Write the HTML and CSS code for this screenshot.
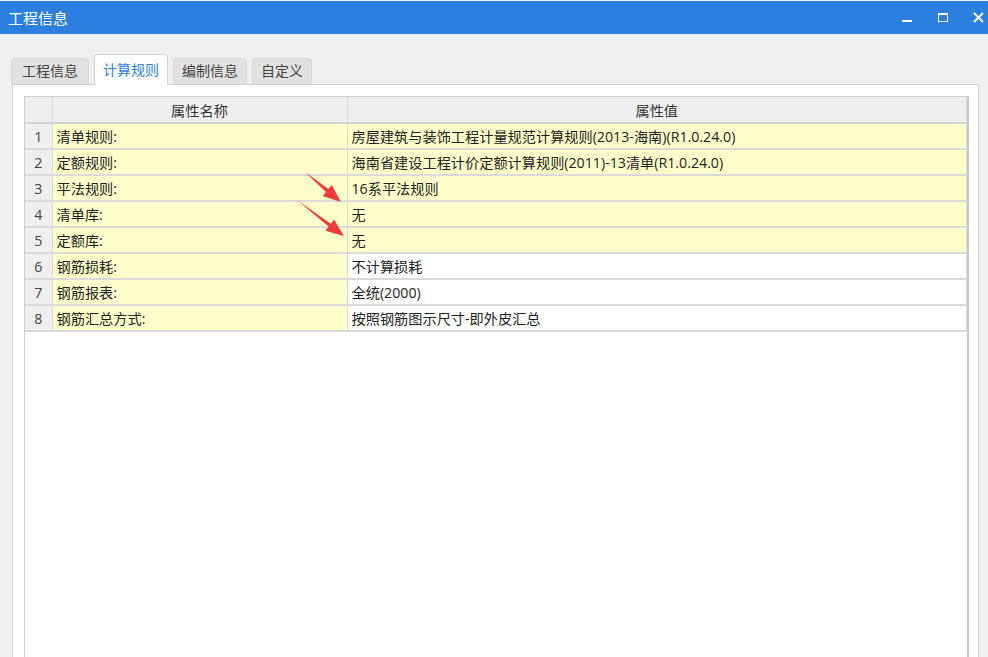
FILE: index.html
```html
<!DOCTYPE html>
<html lang="zh-CN">
<head>
    <meta charset="UTF-8">
    <title>工程信息</title>
    <link rel="stylesheet" href="styles.css">
</head>
<body>
    <div class="titlebar">
        <span class="title">工程信息</span>
        <div class="win-btns">
            <span class="btn-min"></span>
            <span class="btn-max"></span>
            <svg class="btn-close" width="11" height="11" viewBox="0 0 11 11">
                <path d="M1 1 L10 10 M10 1 L1 10" stroke="#fff" stroke-width="1.8"/>
            </svg>
        </div>
    </div>

    <div class="content">
        <div class="tabs">
            <div class="tab first">工程信息</div>
            <div class="tab active">计算规则</div>
            <div class="tab">编制信息</div>
            <div class="tab">自定义</div>
        </div>
        <div class="panel">
            <div class="grid">
                <table>
                    <thead>
                        <tr>
                            <th class="num"></th>
                            <th class="name">属性名称</th>
                            <th>属性值</th>
                        </tr>
                    </thead>
                    <tbody>
                        <tr class="hl">
                            <td class="num">1</td>
                            <td class="name">清单规则:</td>
                            <td>房屋建筑与装饰工程计量规范计算规则(2013-海南)(R1.0.24.0)</td>
                        </tr>
                        <tr class="hl">
                            <td class="num">2</td>
                            <td class="name">定额规则:</td>
                            <td>海南省建设工程计价定额计算规则(2011)-13清单(R1.0.24.0)</td>
                        </tr>
                        <tr class="hl">
                            <td class="num">3</td>
                            <td class="name">平法规则:</td>
                            <td>16系平法规则</td>
                        </tr>
                        <tr class="hl">
                            <td class="num">4</td>
                            <td class="name">清单库:</td>
                            <td>无</td>
                        </tr>
                        <tr class="hl">
                            <td class="num">5</td>
                            <td class="name">定额库:</td>
                            <td>无</td>
                        </tr>
                        <tr>
                            <td class="num">6</td>
                            <td class="name">钢筋损耗:</td>
                            <td>不计算损耗</td>
                        </tr>
                        <tr>
                            <td class="num">7</td>
                            <td class="name">钢筋报表:</td>
                            <td>全统(2000)</td>
                        </tr>
                        <tr>
                            <td class="num">8</td>
                            <td class="name">钢筋汇总方式:</td>
                            <td>按照钢筋图示尺寸-即外皮汇总</td>
                        </tr>
                    </tbody>
                </table>
            </div>
        </div>
    </div>

    <!-- annotation arrows drawn over the grid -->
    <svg class="arrows" width="988" height="657" viewBox="0 0 988 657">
        <path d="M305 172 L328.4 189.1 L331.7 185.1 L341 202 L322.7 195.9 L326 191.9 Z" fill="#f23a3a"/>
        <path d="M297 200 L330.8 223.7 L334 219.5 L344 236 L325.4 230.7 L328.6 226.5 Z" fill="#f23a3a"/>
    </svg>
</body>
</html>
```

FILE: styles.css
```css
* {
    margin: 0;
    padding: 0;
    box-sizing: border-box;
}

html, body {
    height: 100%;
}

body {
    background: #f0f0f0;
    font-family: "Open Sans", "Noto Sans CJK SC", sans-serif;
    font-size: 14px;
    color: #222;
    display: flex;
    flex-direction: column;
    overflow: hidden;
}

.titlebar {
    height: 34px;
    background: #2b7fdf;
    border-top: 1px solid #e8eef7;
    color: white;
    display: flex;
    align-items: center;
    justify-content: space-between;
    padding: 0 0 0 8px;
}

.title {
    font-size: 15px;
}

.win-btns {
    display: flex;
    align-items: center;
}

.btn-min {
    width: 10px;
    height: 2px;
    background: white;
    margin: 7px 26px 0 0;
}

.btn-max {
    width: 10px;
    height: 9px;
    border: 1px solid white;
    border-top-width: 2px;
    margin-right: 25px;
}

.btn-close {
    margin-right: 4px;
}

.content {
    flex: 1;
    display: flex;
    flex-direction: column;
    padding: 20px 9px 0 11px;
}

.tabs {
    display: flex;
    align-items: flex-end;
    gap: 5px;
    height: 30px;
    position: relative;
    z-index: 1;
}

.tab {
    height: 26px;
    padding: 0 8px;
    background: #e1e1e1;
    border: 1px solid #d9d9d9;
    border-bottom: none;
    border-radius: 4px 4px 0 0;
    color: #444;
    line-height: 24px;
}

.tab.first {
    padding: 0 10px;
}

.tab.active {
    height: 31px;
    background: white;
    color: #2b7fdf;
    line-height: 29px;
    border-color: #d4d4d4;
    margin-bottom: -1px;
}

.panel {
    flex: 1;
    background: white;
    border: 1px solid #d0d0d0;
    border-bottom: none;
    margin-left: 1px;
    padding: 11px 9px 0 11px;
    display: flex;
}

.grid {
    flex: 1;
    border: 1px solid #cfcfcf;
    border-right: 2px solid #c8c8c8;
    border-bottom: none;
}

table {
    width: 100%;
    border-collapse: collapse;
    table-layout: fixed;
    font-size: 14.2px;
}

th, td {
    height: 26px;
    border: 1px solid #dadada;
    border-width: 0 1px 2px 0;
    padding: 0 4px;
    text-align: left;
    white-space: nowrap;
    overflow: hidden;
}

th {
    background: #efefef;
    font-weight: normal;
    text-align: center;
    color: #333;
    border-bottom-color: #d4d4d4;
}

th.num, td.num {
    width: 27px;
    background: #efefef;
    text-align: center;
    color: #444;
    padding: 0;
}

th.name, td.name {
    width: 295px;
}

td.name {
    background: #ffffcc;
}

tr.hl td {
    background: #ffffcc;
}

tr.hl td.num {
    background: #efefef;
}

.arrows {
    position: absolute;
    left: 0;
    top: 0;
    pointer-events: none;
}
```
